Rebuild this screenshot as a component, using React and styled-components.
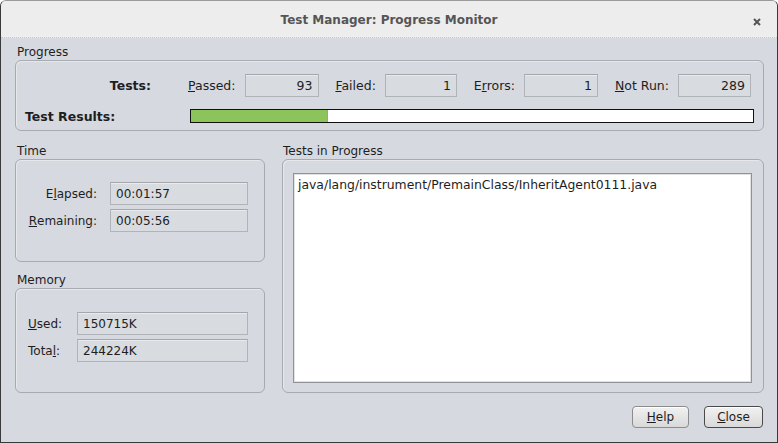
import React from 'react'
import styled, { createGlobalStyle } from 'styled-components';

const GlobalStyle = createGlobalStyle`
    html, body {
        margin: 0;
        padding: 0;
        background: #ffffff;
    }
    body {
        font-family: "DejaVu Sans", "Liberation Sans", sans-serif;
        font-size: 12px;
        color: #1e1e1e;
    }
`;

const Window = styled.div`
    width: 778px;
    height: 443px;
    box-sizing: border-box;
    border: 1px solid #3a3a3a;
    border-top-color: #9a9a9a;
    border-radius: 6px 6px 0 0;
    overflow: hidden;
    display: flex;
    flex-direction: column;
    background: #d6d9df;
`;

const TitleBar = styled.div`
    height: 36px;
    flex: none;
    position: relative;
    display: flex;
    align-items: center;
    justify-content: center;
    background: #ededed;
    border-bottom: 1px dotted #c9c9c9;
`;

const Title = styled.div`
    font-weight: bold;
    font-size: 12px;
    color: #555555;
    margin-top: 2px;
`;

const CloseX = styled.div`
    position: absolute;
    right: 16px;
    top: 17px;
    width: 8px;
    height: 8px;
    display: flex;
`;

const Body = styled.div`
    flex: 1;
    display: flex;
    flex-direction: column;
    padding: 6px 13px 14px 14px;
    min-height: 0;
`;

const SectionLabel = styled.div`
    height: 16px;
    line-height: 16px;
    padding-left: ${p => p.$indent || 2}px;
    flex: none;
`;

const Group = styled.div`
    border: 1px solid #a7aaaf;
    border-radius: 6px;
    box-shadow: inset 1px 1px 0 #e6e8eb;
    box-sizing: border-box;
`;

const ProgressGroup = styled(Group)`
    display: grid;
    grid-template-columns: 165px 1fr;
    grid-template-rows: 23px 14px;
    row-gap: 12px;
    padding: 13px 9px 7px 9px;
    align-items: center;
`;

const BoldLabel = styled.div`
    font-weight: bold;
    font-size: 12.5px;
    text-align: ${p => p.$align || 'left'};
    padding-right: ${p => p.$padRight || 0}px;
`;

const CountsRow = styled.div`
    display: flex;
    justify-content: space-between;
    margin: 0 3px 0 -2px;
    height: 23px;
    font-size: 12.5px;
`;

const Count = styled.div`
    display: flex;
    align-items: center;
    gap: 9px;
`;

const Field = styled.div`
    box-sizing: border-box;
    height: 23px;
    width: ${p => p.$width ? `${p.$width}px` : 'auto'};
    border: 1px solid #b0b3b8;
    border-top-color: #a3a6ab;
    box-shadow: inset 0 1px 0 #e8eaed;
    background: #d8dbe0;
    display: flex;
    align-items: center;
    justify-content: ${p => p.$right ? 'flex-end' : 'flex-start'};
    padding: 0 5px;
`;

const Bar = styled.div`
    height: 14px;
    box-sizing: border-box;
    border: 1px solid #111;
    background: #ffffff;
    display: flex;
`;

const BarFill = styled.div`
    background: #8cc35a;
    border-right: 1px solid #9aa0a0;
`;

const Middle = styled.div`
    flex: 1;
    display: flex;
    gap: 17px;
    margin-top: 12px;
    min-height: 0;
`;

const LeftColumn = styled.div`
    width: 250px;
    display: flex;
    flex-direction: column;
`;

const RightColumn = styled.div`
    flex: 1;
    display: flex;
    flex-direction: column;
`;

const FormGroup = styled(Group)`
    flex: ${p => p.$grow ? 1 : 'none'};
    height: ${p => p.$height ? `${p.$height}px` : 'auto'};
    display: grid;
    grid-template-columns: ${p => p.$labelWidth}px 1fr;
    grid-auto-rows: 23px;
    column-gap: 13px;
    row-gap: 4px;
    align-content: start;
    padding: ${p => p.$padTop}px 16px 0 12px;
`;

const FormLabel = styled.div`
    display: flex;
    align-items: center;
    justify-content: ${p => p.$align === 'right' ? 'flex-end' : 'flex-start'};
`;

const ListGroup = styled(Group)`
    flex: 1;
    display: flex;
    padding: 13px 11px 9px 10px;
`;

const List = styled.div`
    flex: 1;
    background: #ffffff;
    border: 1px solid #8f9296;
    box-shadow: inset 0 0 0 1px #e2e2e2;
    padding: 4px 4px;
    line-height: 14px;
    font-size: 12.4px;
`;

const ButtonRow = styled.div`
    display: flex;
    justify-content: flex-end;
    gap: 15px;
    margin-top: 13px;
    padding-right: 1px;
`;

const Button = styled.button`
    font-family: "DejaVu Sans", sans-serif;
    font-size: 12px;
    color: #1e1e1e;
    height: 22px;
    width: ${p => p.$width}px;
    padding: 0;
    border-radius: 4px;
    border: 1px solid ${p => p.$default ? '#4a4a4a' : '#8c8c8c'};
    background: linear-gradient(#f1f1f1, #d9d9d9);
    box-shadow: inset 0 1px 0 #ffffff;
`;

const Spacer = styled.div`
    height: 10px;
    flex: none;
`;

function Mn({ children }) {
    return <u>{children}</u>;
}

export default function App() {
    const passed = 93;
    const total = 93 + 1 + 1 + 289;
    return (
        <>
            <GlobalStyle />
            <Window>
                <TitleBar>
                    <Title>Test Manager: Progress Monitor</Title>
                    <CloseX>
                        <svg width="8" height="8" viewBox="0 0 8 8">
                            <path d="M1 1 L7 7 M7 1 L1 7" stroke="#555" strokeWidth="2" />
                        </svg>
                    </CloseX>
                </TitleBar>
                <Body>
                    <SectionLabel>Progress</SectionLabel>
                    <ProgressGroup>
                        <BoldLabel $align="right" $padRight={39}>Tests:</BoldLabel>
                        <CountsRow>
                            <Count><span><Mn>P</Mn>assed:</span><Field $width={74} $right>93</Field></Count>
                            <Count><span><Mn>F</Mn>ailed:</span><Field $width={72} $right>1</Field></Count>
                            <Count><span>E<Mn>r</Mn>rors:</span><Field $width={74} $right>1</Field></Count>
                            <Count><span><Mn>N</Mn>ot Run:</span><Field $width={73} $right>289</Field></Count>
                        </CountsRow>
                        <BoldLabel>Test Results:</BoldLabel>
                        <Bar>
                            <BarFill style={{ width: `${(passed / total) * 100}%` }} />
                        </Bar>
                    </ProgressGroup>
                    <Middle>
                        <LeftColumn>
                            <SectionLabel>Time</SectionLabel>
                            <FormGroup $height={103} $labelWidth={69} $padTop={22}>
                                <FormLabel $align="right">E<Mn>l</Mn>apsed:</FormLabel>
                                <Field>00:01:57</Field>
                                <FormLabel $align="right"><Mn>R</Mn>emaining:</FormLabel>
                                <Field>00:05:56</Field>
                            </FormGroup>
                            <Spacer />
                            <SectionLabel>Memory</SectionLabel>
                            <FormGroup $grow $labelWidth={36} $padTop={23}>
                                <FormLabel><Mn>U</Mn>sed:</FormLabel>
                                <Field>150715K</Field>
                                <FormLabel>Tota<Mn>l</Mn>:</FormLabel>
                                <Field>244224K</Field>
                            </FormGroup>
                        </LeftColumn>
                        <RightColumn>
                            <SectionLabel $indent={1}>Tests in Progress</SectionLabel>
                            <ListGroup>
                                <List>java/lang/instrument/PremainClass/InheritAgent0111.java</List>
                            </ListGroup>
                        </RightColumn>
                    </Middle>
                    <ButtonRow>
                        <Button $width={57}><Mn>H</Mn>elp</Button>
                        <Button $width={59} $default><Mn>C</Mn>lose</Button>
                    </ButtonRow>
                </Body>
            </Window>
        </>
    );
}
